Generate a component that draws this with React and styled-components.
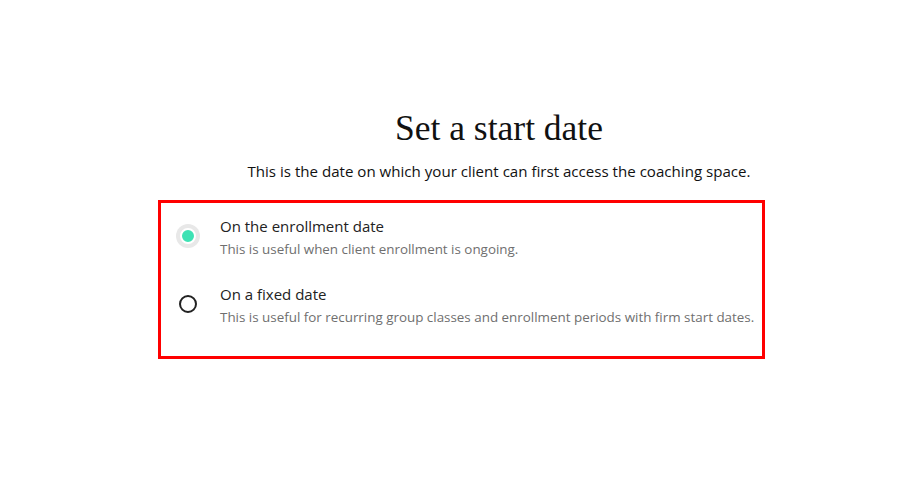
import React, { useState } from "react";
import styled, { createGlobalStyle } from "styled-components";

const Global = createGlobalStyle`
  html, body { margin: 0; padding: 0; background: #ffffff; }
  body { font-family: "Open Sans", "Noto Sans", sans-serif; }
`;

const Page = styled.div`
  width: 900px;
  height: 486px;
  box-sizing: border-box;
  padding: 108px 0 0 158px;
`;

const Column = styled.div`
  width: 682px;
  display: flex;
  flex-direction: column;
`;

const Heading = styled.h1`
  margin: 0;
  text-align: center;
  font-family: "Liberation Serif", serif;
  font-weight: 400;
  font-size: 35.5px;
  line-height: 40px;
  color: #111;
`;

const Lead = styled.p`
  margin: 12px 0 0;
  text-align: center;
  font-family: "Open Sans", sans-serif;
  font-size: 15.1px;
  line-height: 22px;
  color: #111;
`;

const Box = styled.div`
  margin-top: 18px;
  width: 607px;
  box-sizing: border-box;
  border: 3px solid #ff0000;
  padding: 12px 0 29px 15px;
  display: flex;
  flex-direction: column;
  gap: 24px;
`;

const Option = styled.label`
  display: flex;
  align-items: flex-start;
  gap: 20px;
  cursor: pointer;
`;

const RadioWrap = styled.span`
  width: 24px;
  height: 24px;
  margin-top: 9px;
  flex: none;
  display: flex;
  align-items: center;
  justify-content: center;
  border-radius: 50%;
  background: ${(p) => (p.$checked ? "#e8e8e8" : "transparent")};
`;

const Dot = styled.span`
  box-sizing: border-box;
  width: ${(p) => (p.$checked ? "16px" : "18px")};
  height: ${(p) => (p.$checked ? "16px" : "18px")};
  border-radius: 50%;
  border: ${(p) => (p.$checked ? "2px solid #ffffff" : "2px solid #222")};
  background: ${(p) => (p.$checked ? "#3ee2b4" : "#fff")};
`;

const Texts = styled.span`
  display: flex;
  flex-direction: column;
  gap: 2px;
`;

const Title = styled.span`
  font-size: 15px;
  line-height: 22px;
  color: #222;
`;

const Desc = styled.span`
  font-size: 13.4px;
  line-height: 20px;
  color: #6f6f6f;
`;

const options = [
  { id: "enroll", title: "On the enrollment date", desc: "This is useful when client enrollment is ongoing." },
  { id: "fixed", title: "On a fixed date", desc: "This is useful for recurring group classes and enrollment periods with firm start dates." },
];

export default function App() {
  const [value, setValue] = useState("enroll");
  return (
    <>
      <Global />
      <Page>
        <Column>
          <Heading>Set a start date</Heading>
          <Lead>This is the date on which your client can first access the coaching space.</Lead>
          <Box role="radiogroup">
            {options.map((o) => (
              <Option key={o.id} onClick={() => setValue(o.id)}>
                <RadioWrap $checked={value === o.id}>
                  <Dot $checked={value === o.id} />
                </RadioWrap>
                <Texts>
                  <Title>{o.title}</Title>
                  <Desc>{o.desc}</Desc>
                </Texts>
              </Option>
            ))}
          </Box>
        </Column>
      </Page>
    </>
  );
}
